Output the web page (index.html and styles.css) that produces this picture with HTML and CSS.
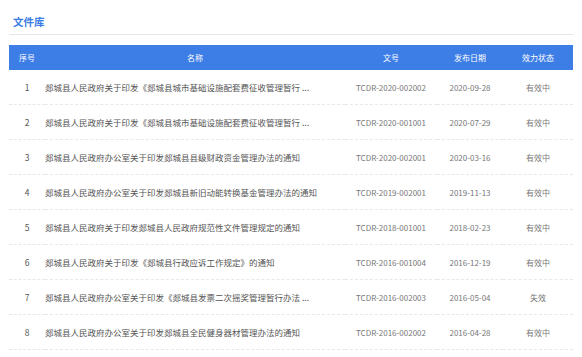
FILE: index.html
```html
<!DOCTYPE html>
<html lang="zh-CN">

<head>
    <meta charset="UTF-8">
    <meta name="viewport" content="width=device-width, initial-scale=1.0">
    <title>文件库</title>
    <link rel="stylesheet" href="styles.css">
</head>

<body>

    <div class="library">
        <h2 class="library-title">文件库</h2>

        <table class="doc-table">
            <colgroup>
                <col class="col-no">
                <col class="col-name">
                <col class="col-code">
                <col class="col-date">
                <col class="col-state">
            </colgroup>
            <thead>
                <tr>
                    <th>序号</th>
                    <th>名称</th>
                    <th>文号</th>
                    <th>发布日期</th>
                    <th>效力状态</th>
                </tr>
            </thead>
            <tbody>
                <tr>
                    <td class="no">1</td>
                    <td class="name">郯城县人民政府关于印发《郯城县城市基础设施配套费征收管理暂行 ...</td>
                    <td>TCDR-2020-002002</td>
                    <td>2020-09-28</td>
                    <td>有效中</td>
                </tr>
                <tr>
                    <td class="no">2</td>
                    <td class="name">郯城县人民政府关于印发《郯城县城市基础设施配套费征收管理暂行 ...</td>
                    <td>TCDR-2020-001001</td>
                    <td>2020-07-29</td>
                    <td>有效中</td>
                </tr>
                <tr>
                    <td class="no">3</td>
                    <td class="name">郯城县人民政府办公室关于印发郯城县县级财政资金管理办法的通知</td>
                    <td>TCDR-2020-002001</td>
                    <td>2020-03-16</td>
                    <td>有效中</td>
                </tr>
                <tr>
                    <td class="no">4</td>
                    <td class="name">郯城县人民政府办公室关于印发郯城县新旧动能转换基金管理办法的通知</td>
                    <td>TCDR-2019-002001</td>
                    <td>2019-11-13</td>
                    <td>有效中</td>
                </tr>
                <tr>
                    <td class="no">5</td>
                    <td class="name">郯城县人民政府关于印发郯城县人民政府规范性文件管理规定的通知</td>
                    <td>TCDR-2018-001001</td>
                    <td>2018-02-23</td>
                    <td>有效中</td>
                </tr>
                <tr>
                    <td class="no">6</td>
                    <td class="name">郯城县人民政府关于印发《郯城县行政应诉工作规定》的通知</td>
                    <td>TCDR-2016-001004</td>
                    <td>2016-12-19</td>
                    <td>有效中</td>
                </tr>
                <tr>
                    <td class="no">7</td>
                    <td class="name">郯城县人民政府办公室关于印发《郯城县发票二次摇奖管理暂行办法 ...</td>
                    <td>TCDR-2016-002003</td>
                    <td>2016-05-04</td>
                    <td>失效</td>
                </tr>
                <tr>
                    <td class="no">8</td>
                    <td class="name">郯城县人民政府办公室关于印发郯城县全民健身器材管理办法的通知</td>
                    <td>TCDR-2016-002002</td>
                    <td>2016-04-28</td>
                    <td>有效中</td>
                </tr>
            </tbody>
        </table>
    </div>

</body>

</html>
```

FILE: styles.css
```css
body {
    margin: 0;
    background-color: #fff;
    font-family: "Noto Sans CJK SC", "Noto Sans", sans-serif;
    color: #333;
}

.library {
    padding: 0 9px;
}

.library-title {
    margin: 0;
    padding: 15px 0 5px 4px;
    font-size: 10.5px;
    line-height: 14px;
    font-weight: bold;
    color: #3a7be5;
    border-bottom: 1px solid #e6e6e6;
}

/* Table */
.doc-table {
    width: 564px;
    margin-top: 10px;
    border-collapse: collapse;
    table-layout: fixed;
}

.col-no {
    width: 36px;
}

.col-name {
    width: 300px;
}

.col-code {
    width: 92px;
}

.col-date {
    width: 66px;
}

.col-state {
    width: 70px;
}

.doc-table th {
    height: 25px;
    padding: 0;
    background-color: #3d7de6;
    color: #fff;
    font-size: 8px;
    font-weight: normal;
    text-align: center;
}

.doc-table td {
    height: 34px;
    padding: 0;
    border-bottom: 1px dashed #e8e8e8;
    font-size: 8px;
    color: #777;
    text-align: center;
    white-space: nowrap;
}

.doc-table td.no {
    color: #555;
    font-size: 8.5px;
}

.doc-table td.name {
    text-align: left;
    font-size: 8.5px;
    color: #555;
    overflow: hidden;
}
```
